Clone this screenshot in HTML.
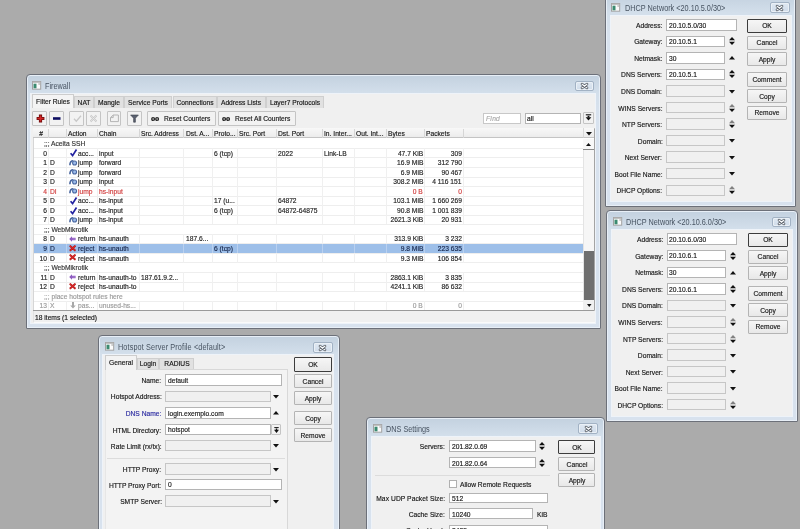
<!DOCTYPE html><html><head><meta charset="utf-8"><style>
*{margin:0;padding:0;box-sizing:border-box}
html,body{width:800px;height:529px;overflow:hidden;background:#ababab;position:relative;font-family:"Liberation Sans",sans-serif;font-size:7.2px;color:#161616}
div{position:absolute}
svg{position:absolute;overflow:visible}
.t{white-space:nowrap;line-height:10px;height:10px;-webkit-text-stroke:.16px currentColor;transform:scaleX(.93);transform-origin:0 50%}
.win{border:1px solid #6c7079;border-radius:4px 4px 1px 1px;background:linear-gradient(#c3d1df 0px,#d3dfeb 18px,#d8e2ee 40px,#d8e2ee 100%);box-shadow:inset 0 0 0 1px #e8eff7}
.cont{background:#f0f0f0;box-shadow:0 0 0 1px #eef3f9}
.ttl{font-size:8.4px;color:#475361;white-space:nowrap;line-height:10px;height:10px;transform:scaleX(.87);transform-origin:0 50%}
.btn{border:1px solid #b4b4b4;background:linear-gradient(#f6f6f6,#e8e8e8);border-radius:1px}
.okb{border:1px solid #3c3c3c;background:linear-gradient(#f6f6f6,#e8e8e8);border-radius:1px}
.tb{border:1px solid #c4c4c4;background:#f2f2f2;border-radius:1px}
.fld{background:#fff;border:1px solid #b4b4b4}
.fdis{background:#f0f0f0;border:1px solid #c6c6c6}
.cls{border:1px solid #a2b2c4;border-radius:2px;background:linear-gradient(#dfe8f2,#d0dcea);box-shadow:inset 0 0 0 1px #eaf0f6}
.tab{background:#e1e1e1;border:1px solid #cfcfcf;border-bottom:none}
.tabA{background:#f4f4f4;border:1px solid #cdcdcd;border-bottom:none}
</style></head><body><div id="root" style="left:0;top:0;width:800px;height:529px;will-change:transform">
<div class="win" style="left:26.00px;top:74.00px;width:575.00px;height:255.00px;"></div>
<div class="cont" style="left:31.30px;top:94.00px;width:563.70px;height:229.00px;"></div>
<svg style="left:32.00px;top:81.00px" width="9.2" height="8.7" viewBox="0 0 9.2 8.7"><rect x=".5" y=".5" width="8.2" height="7.7" fill="#fbfbfb" stroke="#a2a2a2"/><rect x=".5" y=".5" width="8.2" height="1.3" fill="#b4b4b4"/><rect x="1.5" y="2.7" width="3" height="4.6" fill="#3b8a70"/><rect x="6.6" y="2.4" width="1" height="1.2" fill="#777"/></svg>
<div class="ttl" style="left:45.40px;top:81.00px;">Firewall</div>
<div class="cls" style="left:574.50px;top:81.30px;width:19.70px;height:10.20px;"></div>
<svg style="left:580px;top:82px" width="9" height="8" viewBox="0 0 9 8"><path d="M2 2.1L7 5.9M7 2.1L2 5.9" stroke="#5f656d" stroke-width="2.6" stroke-linecap="round"/><path d="M2.1 2.2L6.9 5.8M6.9 2.2L2.1 5.8" stroke="#f6f8fa" stroke-width="1.1" stroke-linecap="round"/></svg>
<div class="tabA" style="left:32.00px;top:94.40px;width:42.40px;height:14.10px;"></div>
<div class="t" style="left:-6.80px;width:120px;text-align:center;top:97.30px;transform-origin:50% 50%;">Filter Rules</div>
<div class="tab" style="left:74.40px;top:96.20px;width:20.00px;height:11.40px;"></div>
<div class="t" style="left:24.40px;width:120px;text-align:center;top:97.90px;transform-origin:50% 50%;">NAT</div>
<div class="tab" style="left:94.40px;top:96.20px;width:29.40px;height:11.40px;"></div>
<div class="t" style="left:49.10px;width:120px;text-align:center;top:97.90px;transform-origin:50% 50%;">Mangle</div>
<div class="tab" style="left:123.80px;top:96.20px;width:48.70px;height:11.40px;"></div>
<div class="t" style="left:88.15px;width:120px;text-align:center;top:97.90px;transform-origin:50% 50%;">Service Ports</div>
<div class="tab" style="left:172.50px;top:96.20px;width:44.50px;height:11.40px;"></div>
<div class="t" style="left:134.75px;width:120px;text-align:center;top:97.90px;transform-origin:50% 50%;">Connections</div>
<div class="tab" style="left:217.00px;top:96.20px;width:48.50px;height:11.40px;"></div>
<div class="t" style="left:181.25px;width:120px;text-align:center;top:97.90px;transform-origin:50% 50%;">Address Lists</div>
<div class="tab" style="left:265.50px;top:96.20px;width:58.30px;height:11.40px;"></div>
<div class="t" style="left:234.65px;width:120px;text-align:center;top:97.90px;transform-origin:50% 50%;">Layer7 Protocols</div>
<div class="tb" style="left:32.30px;top:111.20px;width:14.60px;height:14.80px;"></div>
<div class="tb" style="left:49.00px;top:111.20px;width:14.75px;height:14.80px;"></div>
<div class="tb" style="left:69.40px;top:111.20px;width:14.60px;height:14.80px;"></div>
<div class="tb" style="left:86.25px;top:111.20px;width:14.35px;height:14.80px;"></div>
<div class="tb" style="left:106.50px;top:111.20px;width:14.50px;height:14.80px;"></div>
<div class="tb" style="left:127.20px;top:111.20px;width:14.40px;height:14.80px;"></div>
<svg style="left:34.5px;top:113px" width="11" height="11" viewBox="0 0 11 11"><path d="M5.5 1.6V9.4M1.6 5.5H9.4" stroke="#6e0c0c" stroke-width="3.2"/><path d="M5.5 2.4V8.6M2.4 5.5H8.6" stroke="#d42626" stroke-width="1.6"/></svg>
<svg style="left:51px;top:113px" width="11" height="11" viewBox="0 0 11 11"><path d="M2 5.5H9.5" stroke="#0c0c60" stroke-width="2.6"/></svg>
<svg style="left:71.5px;top:113px" width="11" height="11" viewBox="0 0 11 11"><path d="M2 5.8L4.3 8.2L9 2.8" stroke="#c8c8c8" stroke-width="1.3" fill="none"/></svg>
<svg style="left:88px;top:113px" width="11" height="11" viewBox="0 0 11 11"><path d="M2.5 2.5L8.5 8.5M8.5 2.5L2.5 8.5" stroke="#c8c8c8" stroke-width="1.8"/><path d="M2.5 2.5L8.5 8.5M8.5 2.5L2.5 8.5" stroke="#f2f2f2" stroke-width=".6"/></svg>
<svg style="left:108.5px;top:113px" width="11" height="11" viewBox="0 0 11 11"><path d="M1.5 4.6L4.2 2H9.4V8.6H1.5Z M1.5 4.6H4.2V2" stroke="#b4b4b4" stroke-width="1" fill="none"/></svg>
<svg style="left:129px;top:113px" width="11" height="11" viewBox="0 0 11 11"><path d="M1.6 2H9.4L6.4 5.2V9.2H4.6V5.2Z" fill="#5b6170" stroke="#3a3f4a" stroke-width=".6"/></svg>
<div class="tb" style="left:147.30px;top:111.20px;width:69.00px;height:14.80px;"></div>
<div class="tb" style="left:218.00px;top:111.20px;width:77.50px;height:14.80px;"></div>
<div class="t" style="left:151.00px;top:113.20px;font-weight:bold;font-size:9px;letter-spacing:-.1px;color:#000;font-family:Liberation Serif">oo</div>
<div class="t" style="left:163.80px;top:114.20px;">Reset Counters</div>
<div class="t" style="left:221.80px;top:113.20px;font-weight:bold;font-size:9px;letter-spacing:-.1px;color:#000;font-family:Liberation Serif">oo</div>
<div class="t" style="left:234.50px;top:114.20px;">Reset All Counters</div>
<div class="fld" style="left:482.60px;top:112.50px;width:38.30px;height:11.30px;border-color:#c8c8c8"></div>
<div class="t" style="left:486.00px;top:114.10px;color:#a8a8a8;font-style:italic;letter-spacing:.3px">Find</div>
<div class="fld" style="left:525.20px;top:112.50px;width:56.10px;height:11.30px;"></div>
<div class="t" style="left:527.00px;top:114.10px;">all</div>
<div class="tb" style="left:582.70px;top:112.30px;width:11.50px;height:11.70px;"></div>
<svg style="left:585px;top:114px" width="7" height="8" viewBox="0 0 7 8"><path d="M.8 .8H6.2" stroke="#111" stroke-width="1.1"/><path d="M.6 3.2H6.4L3.5 6.6Z" fill="#111"/><path d="M2.6 1.8H4.4V3.6H2.6Z" fill="#111"/></svg>
<div class="" style="left:33.00px;top:127.80px;width:561.50px;height:182.80px;background:#fff;border:1px solid #d6d6d6;border-right-color:#a4a4a4"></div>
<div class="" style="left:33.00px;top:127.80px;width:550.20px;height:10.70px;background:linear-gradient(#f8f8f8,#ececec);border-bottom:1px solid #c4c4c4"></div>
<div class="" style="left:48.25px;top:128.50px;width:1.00px;height:9.50px;background:#d6d6d6"></div>
<div class="" style="left:65.75px;top:128.50px;width:1.00px;height:9.50px;background:#d6d6d6"></div>
<div class="" style="left:97.00px;top:128.50px;width:1.00px;height:9.50px;background:#d6d6d6"></div>
<div class="" style="left:139.00px;top:128.50px;width:1.00px;height:9.50px;background:#d6d6d6"></div>
<div class="" style="left:183.25px;top:128.50px;width:1.00px;height:9.50px;background:#d6d6d6"></div>
<div class="" style="left:212.00px;top:128.50px;width:1.00px;height:9.50px;background:#d6d6d6"></div>
<div class="" style="left:237.00px;top:128.50px;width:1.00px;height:9.50px;background:#d6d6d6"></div>
<div class="" style="left:275.75px;top:128.50px;width:1.00px;height:9.50px;background:#d6d6d6"></div>
<div class="" style="left:322.00px;top:128.50px;width:1.00px;height:9.50px;background:#d6d6d6"></div>
<div class="" style="left:354.00px;top:128.50px;width:1.00px;height:9.50px;background:#d6d6d6"></div>
<div class="" style="left:385.80px;top:128.50px;width:1.00px;height:9.50px;background:#d6d6d6"></div>
<div class="" style="left:424.10px;top:128.50px;width:1.00px;height:9.50px;background:#d6d6d6"></div>
<div class="" style="left:462.90px;top:128.50px;width:1.00px;height:9.50px;background:#d6d6d6"></div>
<div class="t" style="left:-19.12px;width:120px;text-align:center;top:129.20px;transform-origin:50% 50%;">#</div>
<div class="t" style="left:68.05px;top:129.20px;">Action</div>
<div class="t" style="left:99.30px;top:129.20px;">Chain</div>
<div class="t" style="left:141.30px;top:129.20px;">Src. Address</div>
<div class="t" style="left:185.55px;top:129.20px;">Dst. A...</div>
<div class="t" style="left:214.30px;top:129.20px;">Proto...</div>
<div class="t" style="left:239.30px;top:129.20px;">Src. Port</div>
<div class="t" style="left:278.05px;top:129.20px;">Dst. Port</div>
<div class="t" style="left:324.30px;top:129.20px;">In. Inter...</div>
<div class="t" style="left:356.30px;top:129.20px;">Out. Int...</div>
<div class="t" style="left:388.10px;top:129.20px;">Bytes</div>
<div class="t" style="left:426.40px;top:129.20px;">Packets</div>
<div class="" style="left:583.20px;top:127.80px;width:11.00px;height:10.70px;background:linear-gradient(#f8f8f8,#ececec);border-left:1px solid #d8d8d8;border-bottom:1px solid #c4c4c4"></div>
<svg style="left:585.5px;top:131.5px" width="6" height="4" viewBox="0 0 6 4"><path d="M0 0H6L3 3.6Z" fill="#111"/></svg>
<div class="" style="left:34.00px;top:147.94px;width:549.20px;height:1.00px;background:#eeeeee"></div>
<div class="t" style="left:43.80px;top:139.07px;color:#333">;;; Aceita SSH</div>
<div class="" style="left:34.00px;top:157.48px;width:549.20px;height:1.00px;background:#eeeeee"></div>
<div class="" style="left:48.25px;top:148.14px;width:1.00px;height:9.54px;background:#f0f0f0"></div>
<div class="" style="left:65.75px;top:148.14px;width:1.00px;height:9.54px;background:#f0f0f0"></div>
<div class="" style="left:97.00px;top:148.14px;width:1.00px;height:9.54px;background:#f0f0f0"></div>
<div class="" style="left:139.00px;top:148.14px;width:1.00px;height:9.54px;background:#f0f0f0"></div>
<div class="" style="left:183.25px;top:148.14px;width:1.00px;height:9.54px;background:#f0f0f0"></div>
<div class="" style="left:212.00px;top:148.14px;width:1.00px;height:9.54px;background:#f0f0f0"></div>
<div class="" style="left:237.00px;top:148.14px;width:1.00px;height:9.54px;background:#f0f0f0"></div>
<div class="" style="left:275.75px;top:148.14px;width:1.00px;height:9.54px;background:#f0f0f0"></div>
<div class="" style="left:322.00px;top:148.14px;width:1.00px;height:9.54px;background:#f0f0f0"></div>
<div class="" style="left:354.00px;top:148.14px;width:1.00px;height:9.54px;background:#f0f0f0"></div>
<div class="" style="left:385.80px;top:148.14px;width:1.00px;height:9.54px;background:#f0f0f0"></div>
<div class="" style="left:424.10px;top:148.14px;width:1.00px;height:9.54px;background:#f0f0f0"></div>
<div class="" style="left:462.90px;top:148.14px;width:1.00px;height:9.54px;background:#f0f0f0"></div>
<div class="t" style="right:752.80px;top:148.61px;text-align:right;transform-origin:100% 50%;color:#222">0</div>
<div class="t" style="left:49.80px;top:148.61px;color:#222"></div>
<svg style="left:69.6px;top:149.34px" width="7" height="7.4" viewBox="0 0 7 7.4"><path d="M.6 4.2L2.6 6.6L6.5 .5" stroke="#2222a0" stroke-width="1.7" fill="none"/></svg>
<div class="t" style="left:77.80px;top:148.61px;color:#222">acc...</div>
<div class="t" style="left:99.30px;top:148.61px;color:#222">input</div>
<div class="t" style="left:214.30px;top:148.61px;color:#222">6 (tcp)</div>
<div class="t" style="left:278.05px;top:148.61px;color:#222">2022</div>
<div class="t" style="left:324.30px;top:148.61px;color:#222">Link-LB</div>
<div class="t" style="right:376.90px;top:148.61px;text-align:right;transform-origin:100% 50%;color:#222">47.7 KiB</div>
<div class="t" style="right:338.10px;top:148.61px;text-align:right;transform-origin:100% 50%;color:#222">309</div>
<div class="" style="left:34.00px;top:167.02px;width:549.20px;height:1.00px;background:#eeeeee"></div>
<div class="" style="left:48.25px;top:157.68px;width:1.00px;height:9.54px;background:#f0f0f0"></div>
<div class="" style="left:65.75px;top:157.68px;width:1.00px;height:9.54px;background:#f0f0f0"></div>
<div class="" style="left:97.00px;top:157.68px;width:1.00px;height:9.54px;background:#f0f0f0"></div>
<div class="" style="left:139.00px;top:157.68px;width:1.00px;height:9.54px;background:#f0f0f0"></div>
<div class="" style="left:183.25px;top:157.68px;width:1.00px;height:9.54px;background:#f0f0f0"></div>
<div class="" style="left:212.00px;top:157.68px;width:1.00px;height:9.54px;background:#f0f0f0"></div>
<div class="" style="left:237.00px;top:157.68px;width:1.00px;height:9.54px;background:#f0f0f0"></div>
<div class="" style="left:275.75px;top:157.68px;width:1.00px;height:9.54px;background:#f0f0f0"></div>
<div class="" style="left:322.00px;top:157.68px;width:1.00px;height:9.54px;background:#f0f0f0"></div>
<div class="" style="left:354.00px;top:157.68px;width:1.00px;height:9.54px;background:#f0f0f0"></div>
<div class="" style="left:385.80px;top:157.68px;width:1.00px;height:9.54px;background:#f0f0f0"></div>
<div class="" style="left:424.10px;top:157.68px;width:1.00px;height:9.54px;background:#f0f0f0"></div>
<div class="" style="left:462.90px;top:157.68px;width:1.00px;height:9.54px;background:#f0f0f0"></div>
<div class="t" style="right:752.80px;top:158.15px;text-align:right;transform-origin:100% 50%;color:#222">1</div>
<div class="t" style="left:49.80px;top:158.15px;color:#222">D</div>
<svg style="left:68.9px;top:159.68px" width="8.4" height="5.6" viewBox="0 0 8.4 5.6"><path d="M.9 5.2C.9 2 2.4 .7 4.4 .7" stroke="#46649e" stroke-width="1.6" fill="none"/><circle cx="5.6" cy="3" r="2" fill="#9cbcea" stroke="#4a68a2" stroke-width="1.1"/></svg>
<div class="t" style="left:77.80px;top:158.15px;color:#222">jump</div>
<div class="t" style="left:99.30px;top:158.15px;color:#222">forward</div>
<div class="t" style="right:376.90px;top:158.15px;text-align:right;transform-origin:100% 50%;color:#222">16.9 MiB</div>
<div class="t" style="right:338.10px;top:158.15px;text-align:right;transform-origin:100% 50%;color:#222">312 790</div>
<div class="" style="left:34.00px;top:176.56px;width:549.20px;height:1.00px;background:#eeeeee"></div>
<div class="" style="left:48.25px;top:167.22px;width:1.00px;height:9.54px;background:#f0f0f0"></div>
<div class="" style="left:65.75px;top:167.22px;width:1.00px;height:9.54px;background:#f0f0f0"></div>
<div class="" style="left:97.00px;top:167.22px;width:1.00px;height:9.54px;background:#f0f0f0"></div>
<div class="" style="left:139.00px;top:167.22px;width:1.00px;height:9.54px;background:#f0f0f0"></div>
<div class="" style="left:183.25px;top:167.22px;width:1.00px;height:9.54px;background:#f0f0f0"></div>
<div class="" style="left:212.00px;top:167.22px;width:1.00px;height:9.54px;background:#f0f0f0"></div>
<div class="" style="left:237.00px;top:167.22px;width:1.00px;height:9.54px;background:#f0f0f0"></div>
<div class="" style="left:275.75px;top:167.22px;width:1.00px;height:9.54px;background:#f0f0f0"></div>
<div class="" style="left:322.00px;top:167.22px;width:1.00px;height:9.54px;background:#f0f0f0"></div>
<div class="" style="left:354.00px;top:167.22px;width:1.00px;height:9.54px;background:#f0f0f0"></div>
<div class="" style="left:385.80px;top:167.22px;width:1.00px;height:9.54px;background:#f0f0f0"></div>
<div class="" style="left:424.10px;top:167.22px;width:1.00px;height:9.54px;background:#f0f0f0"></div>
<div class="" style="left:462.90px;top:167.22px;width:1.00px;height:9.54px;background:#f0f0f0"></div>
<div class="t" style="right:752.80px;top:167.69px;text-align:right;transform-origin:100% 50%;color:#222">2</div>
<div class="t" style="left:49.80px;top:167.69px;color:#222">D</div>
<svg style="left:68.9px;top:169.22px" width="8.4" height="5.6" viewBox="0 0 8.4 5.6"><path d="M.9 5.2C.9 2 2.4 .7 4.4 .7" stroke="#46649e" stroke-width="1.6" fill="none"/><circle cx="5.6" cy="3" r="2" fill="#9cbcea" stroke="#4a68a2" stroke-width="1.1"/></svg>
<div class="t" style="left:77.80px;top:167.69px;color:#222">jump</div>
<div class="t" style="left:99.30px;top:167.69px;color:#222">forward</div>
<div class="t" style="right:376.90px;top:167.69px;text-align:right;transform-origin:100% 50%;color:#222">6.9 MiB</div>
<div class="t" style="right:338.10px;top:167.69px;text-align:right;transform-origin:100% 50%;color:#222">90 467</div>
<div class="" style="left:34.00px;top:186.10px;width:549.20px;height:1.00px;background:#eeeeee"></div>
<div class="" style="left:48.25px;top:176.76px;width:1.00px;height:9.54px;background:#f0f0f0"></div>
<div class="" style="left:65.75px;top:176.76px;width:1.00px;height:9.54px;background:#f0f0f0"></div>
<div class="" style="left:97.00px;top:176.76px;width:1.00px;height:9.54px;background:#f0f0f0"></div>
<div class="" style="left:139.00px;top:176.76px;width:1.00px;height:9.54px;background:#f0f0f0"></div>
<div class="" style="left:183.25px;top:176.76px;width:1.00px;height:9.54px;background:#f0f0f0"></div>
<div class="" style="left:212.00px;top:176.76px;width:1.00px;height:9.54px;background:#f0f0f0"></div>
<div class="" style="left:237.00px;top:176.76px;width:1.00px;height:9.54px;background:#f0f0f0"></div>
<div class="" style="left:275.75px;top:176.76px;width:1.00px;height:9.54px;background:#f0f0f0"></div>
<div class="" style="left:322.00px;top:176.76px;width:1.00px;height:9.54px;background:#f0f0f0"></div>
<div class="" style="left:354.00px;top:176.76px;width:1.00px;height:9.54px;background:#f0f0f0"></div>
<div class="" style="left:385.80px;top:176.76px;width:1.00px;height:9.54px;background:#f0f0f0"></div>
<div class="" style="left:424.10px;top:176.76px;width:1.00px;height:9.54px;background:#f0f0f0"></div>
<div class="" style="left:462.90px;top:176.76px;width:1.00px;height:9.54px;background:#f0f0f0"></div>
<div class="t" style="right:752.80px;top:177.23px;text-align:right;transform-origin:100% 50%;color:#222">3</div>
<div class="t" style="left:49.80px;top:177.23px;color:#222">D</div>
<svg style="left:68.9px;top:178.76px" width="8.4" height="5.6" viewBox="0 0 8.4 5.6"><path d="M.9 5.2C.9 2 2.4 .7 4.4 .7" stroke="#46649e" stroke-width="1.6" fill="none"/><circle cx="5.6" cy="3" r="2" fill="#9cbcea" stroke="#4a68a2" stroke-width="1.1"/></svg>
<div class="t" style="left:77.80px;top:177.23px;color:#222">jump</div>
<div class="t" style="left:99.30px;top:177.23px;color:#222">input</div>
<div class="t" style="right:376.90px;top:177.23px;text-align:right;transform-origin:100% 50%;color:#222">308.2 MiB</div>
<div class="t" style="right:338.10px;top:177.23px;text-align:right;transform-origin:100% 50%;color:#222">4 116 151</div>
<div class="" style="left:34.00px;top:195.64px;width:549.20px;height:1.00px;background:#eeeeee"></div>
<div class="" style="left:48.25px;top:186.30px;width:1.00px;height:9.54px;background:#f0f0f0"></div>
<div class="" style="left:65.75px;top:186.30px;width:1.00px;height:9.54px;background:#f0f0f0"></div>
<div class="" style="left:97.00px;top:186.30px;width:1.00px;height:9.54px;background:#f0f0f0"></div>
<div class="" style="left:139.00px;top:186.30px;width:1.00px;height:9.54px;background:#f0f0f0"></div>
<div class="" style="left:183.25px;top:186.30px;width:1.00px;height:9.54px;background:#f0f0f0"></div>
<div class="" style="left:212.00px;top:186.30px;width:1.00px;height:9.54px;background:#f0f0f0"></div>
<div class="" style="left:237.00px;top:186.30px;width:1.00px;height:9.54px;background:#f0f0f0"></div>
<div class="" style="left:275.75px;top:186.30px;width:1.00px;height:9.54px;background:#f0f0f0"></div>
<div class="" style="left:322.00px;top:186.30px;width:1.00px;height:9.54px;background:#f0f0f0"></div>
<div class="" style="left:354.00px;top:186.30px;width:1.00px;height:9.54px;background:#f0f0f0"></div>
<div class="" style="left:385.80px;top:186.30px;width:1.00px;height:9.54px;background:#f0f0f0"></div>
<div class="" style="left:424.10px;top:186.30px;width:1.00px;height:9.54px;background:#f0f0f0"></div>
<div class="" style="left:462.90px;top:186.30px;width:1.00px;height:9.54px;background:#f0f0f0"></div>
<div class="t" style="right:752.80px;top:186.77px;text-align:right;transform-origin:100% 50%;color:#d03a3a">4</div>
<div class="t" style="left:49.80px;top:186.77px;color:#d03a3a">DI</div>
<svg style="left:68.9px;top:188.30px" width="8.4" height="5.6" viewBox="0 0 8.4 5.6"><path d="M.9 5.2C.9 2 2.4 .7 4.4 .7" stroke="#46649e" stroke-width="1.6" fill="none"/><circle cx="5.6" cy="3" r="2" fill="#9cbcea" stroke="#4a68a2" stroke-width="1.1"/></svg>
<div class="t" style="left:77.80px;top:186.77px;color:#d03a3a">jump</div>
<div class="t" style="left:99.30px;top:186.77px;color:#d03a3a">hs-input</div>
<div class="t" style="right:376.90px;top:186.77px;text-align:right;transform-origin:100% 50%;color:#d03a3a">0 B</div>
<div class="t" style="right:338.10px;top:186.77px;text-align:right;transform-origin:100% 50%;color:#d03a3a">0</div>
<div class="" style="left:34.00px;top:205.18px;width:549.20px;height:1.00px;background:#eeeeee"></div>
<div class="" style="left:48.25px;top:195.84px;width:1.00px;height:9.54px;background:#f0f0f0"></div>
<div class="" style="left:65.75px;top:195.84px;width:1.00px;height:9.54px;background:#f0f0f0"></div>
<div class="" style="left:97.00px;top:195.84px;width:1.00px;height:9.54px;background:#f0f0f0"></div>
<div class="" style="left:139.00px;top:195.84px;width:1.00px;height:9.54px;background:#f0f0f0"></div>
<div class="" style="left:183.25px;top:195.84px;width:1.00px;height:9.54px;background:#f0f0f0"></div>
<div class="" style="left:212.00px;top:195.84px;width:1.00px;height:9.54px;background:#f0f0f0"></div>
<div class="" style="left:237.00px;top:195.84px;width:1.00px;height:9.54px;background:#f0f0f0"></div>
<div class="" style="left:275.75px;top:195.84px;width:1.00px;height:9.54px;background:#f0f0f0"></div>
<div class="" style="left:322.00px;top:195.84px;width:1.00px;height:9.54px;background:#f0f0f0"></div>
<div class="" style="left:354.00px;top:195.84px;width:1.00px;height:9.54px;background:#f0f0f0"></div>
<div class="" style="left:385.80px;top:195.84px;width:1.00px;height:9.54px;background:#f0f0f0"></div>
<div class="" style="left:424.10px;top:195.84px;width:1.00px;height:9.54px;background:#f0f0f0"></div>
<div class="" style="left:462.90px;top:195.84px;width:1.00px;height:9.54px;background:#f0f0f0"></div>
<div class="t" style="right:752.80px;top:196.31px;text-align:right;transform-origin:100% 50%;color:#222">5</div>
<div class="t" style="left:49.80px;top:196.31px;color:#222">D</div>
<svg style="left:69.6px;top:197.04px" width="7" height="7.4" viewBox="0 0 7 7.4"><path d="M.6 4.2L2.6 6.6L6.5 .5" stroke="#2222a0" stroke-width="1.7" fill="none"/></svg>
<div class="t" style="left:77.80px;top:196.31px;color:#222">acc...</div>
<div class="t" style="left:99.30px;top:196.31px;color:#222">hs-input</div>
<div class="t" style="left:214.30px;top:196.31px;color:#222">17 (u...</div>
<div class="t" style="left:278.05px;top:196.31px;color:#222">64872</div>
<div class="t" style="right:376.90px;top:196.31px;text-align:right;transform-origin:100% 50%;color:#222">103.1 MiB</div>
<div class="t" style="right:338.10px;top:196.31px;text-align:right;transform-origin:100% 50%;color:#222">1 660 269</div>
<div class="" style="left:34.00px;top:214.72px;width:549.20px;height:1.00px;background:#eeeeee"></div>
<div class="" style="left:48.25px;top:205.38px;width:1.00px;height:9.54px;background:#f0f0f0"></div>
<div class="" style="left:65.75px;top:205.38px;width:1.00px;height:9.54px;background:#f0f0f0"></div>
<div class="" style="left:97.00px;top:205.38px;width:1.00px;height:9.54px;background:#f0f0f0"></div>
<div class="" style="left:139.00px;top:205.38px;width:1.00px;height:9.54px;background:#f0f0f0"></div>
<div class="" style="left:183.25px;top:205.38px;width:1.00px;height:9.54px;background:#f0f0f0"></div>
<div class="" style="left:212.00px;top:205.38px;width:1.00px;height:9.54px;background:#f0f0f0"></div>
<div class="" style="left:237.00px;top:205.38px;width:1.00px;height:9.54px;background:#f0f0f0"></div>
<div class="" style="left:275.75px;top:205.38px;width:1.00px;height:9.54px;background:#f0f0f0"></div>
<div class="" style="left:322.00px;top:205.38px;width:1.00px;height:9.54px;background:#f0f0f0"></div>
<div class="" style="left:354.00px;top:205.38px;width:1.00px;height:9.54px;background:#f0f0f0"></div>
<div class="" style="left:385.80px;top:205.38px;width:1.00px;height:9.54px;background:#f0f0f0"></div>
<div class="" style="left:424.10px;top:205.38px;width:1.00px;height:9.54px;background:#f0f0f0"></div>
<div class="" style="left:462.90px;top:205.38px;width:1.00px;height:9.54px;background:#f0f0f0"></div>
<div class="t" style="right:752.80px;top:205.85px;text-align:right;transform-origin:100% 50%;color:#222">6</div>
<div class="t" style="left:49.80px;top:205.85px;color:#222">D</div>
<svg style="left:69.6px;top:206.58px" width="7" height="7.4" viewBox="0 0 7 7.4"><path d="M.6 4.2L2.6 6.6L6.5 .5" stroke="#2222a0" stroke-width="1.7" fill="none"/></svg>
<div class="t" style="left:77.80px;top:205.85px;color:#222">acc...</div>
<div class="t" style="left:99.30px;top:205.85px;color:#222">hs-input</div>
<div class="t" style="left:214.30px;top:205.85px;color:#222">6 (tcp)</div>
<div class="t" style="left:278.05px;top:205.85px;color:#222">64872-64875</div>
<div class="t" style="right:376.90px;top:205.85px;text-align:right;transform-origin:100% 50%;color:#222">90.8 MiB</div>
<div class="t" style="right:338.10px;top:205.85px;text-align:right;transform-origin:100% 50%;color:#222">1 001 839</div>
<div class="" style="left:34.00px;top:224.26px;width:549.20px;height:1.00px;background:#eeeeee"></div>
<div class="" style="left:48.25px;top:214.92px;width:1.00px;height:9.54px;background:#f0f0f0"></div>
<div class="" style="left:65.75px;top:214.92px;width:1.00px;height:9.54px;background:#f0f0f0"></div>
<div class="" style="left:97.00px;top:214.92px;width:1.00px;height:9.54px;background:#f0f0f0"></div>
<div class="" style="left:139.00px;top:214.92px;width:1.00px;height:9.54px;background:#f0f0f0"></div>
<div class="" style="left:183.25px;top:214.92px;width:1.00px;height:9.54px;background:#f0f0f0"></div>
<div class="" style="left:212.00px;top:214.92px;width:1.00px;height:9.54px;background:#f0f0f0"></div>
<div class="" style="left:237.00px;top:214.92px;width:1.00px;height:9.54px;background:#f0f0f0"></div>
<div class="" style="left:275.75px;top:214.92px;width:1.00px;height:9.54px;background:#f0f0f0"></div>
<div class="" style="left:322.00px;top:214.92px;width:1.00px;height:9.54px;background:#f0f0f0"></div>
<div class="" style="left:354.00px;top:214.92px;width:1.00px;height:9.54px;background:#f0f0f0"></div>
<div class="" style="left:385.80px;top:214.92px;width:1.00px;height:9.54px;background:#f0f0f0"></div>
<div class="" style="left:424.10px;top:214.92px;width:1.00px;height:9.54px;background:#f0f0f0"></div>
<div class="" style="left:462.90px;top:214.92px;width:1.00px;height:9.54px;background:#f0f0f0"></div>
<div class="t" style="right:752.80px;top:215.39px;text-align:right;transform-origin:100% 50%;color:#222">7</div>
<div class="t" style="left:49.80px;top:215.39px;color:#222">D</div>
<svg style="left:68.9px;top:216.92px" width="8.4" height="5.6" viewBox="0 0 8.4 5.6"><path d="M.9 5.2C.9 2 2.4 .7 4.4 .7" stroke="#46649e" stroke-width="1.6" fill="none"/><circle cx="5.6" cy="3" r="2" fill="#9cbcea" stroke="#4a68a2" stroke-width="1.1"/></svg>
<div class="t" style="left:77.80px;top:215.39px;color:#222">jump</div>
<div class="t" style="left:99.30px;top:215.39px;color:#222">hs-input</div>
<div class="t" style="right:376.90px;top:215.39px;text-align:right;transform-origin:100% 50%;color:#222">2621.3 KiB</div>
<div class="t" style="right:338.10px;top:215.39px;text-align:right;transform-origin:100% 50%;color:#222">20 931</div>
<div class="" style="left:34.00px;top:233.80px;width:549.20px;height:1.00px;background:#eeeeee"></div>
<div class="t" style="left:43.80px;top:224.93px;color:#333">;;; WebMikrotik</div>
<div class="" style="left:34.00px;top:243.34px;width:549.20px;height:1.00px;background:#eeeeee"></div>
<div class="" style="left:48.25px;top:234.00px;width:1.00px;height:9.54px;background:#f0f0f0"></div>
<div class="" style="left:65.75px;top:234.00px;width:1.00px;height:9.54px;background:#f0f0f0"></div>
<div class="" style="left:97.00px;top:234.00px;width:1.00px;height:9.54px;background:#f0f0f0"></div>
<div class="" style="left:139.00px;top:234.00px;width:1.00px;height:9.54px;background:#f0f0f0"></div>
<div class="" style="left:183.25px;top:234.00px;width:1.00px;height:9.54px;background:#f0f0f0"></div>
<div class="" style="left:212.00px;top:234.00px;width:1.00px;height:9.54px;background:#f0f0f0"></div>
<div class="" style="left:237.00px;top:234.00px;width:1.00px;height:9.54px;background:#f0f0f0"></div>
<div class="" style="left:275.75px;top:234.00px;width:1.00px;height:9.54px;background:#f0f0f0"></div>
<div class="" style="left:322.00px;top:234.00px;width:1.00px;height:9.54px;background:#f0f0f0"></div>
<div class="" style="left:354.00px;top:234.00px;width:1.00px;height:9.54px;background:#f0f0f0"></div>
<div class="" style="left:385.80px;top:234.00px;width:1.00px;height:9.54px;background:#f0f0f0"></div>
<div class="" style="left:424.10px;top:234.00px;width:1.00px;height:9.54px;background:#f0f0f0"></div>
<div class="" style="left:462.90px;top:234.00px;width:1.00px;height:9.54px;background:#f0f0f0"></div>
<div class="t" style="right:752.80px;top:234.47px;text-align:right;transform-origin:100% 50%;color:#222">8</div>
<div class="t" style="left:49.80px;top:234.47px;color:#222">D</div>
<svg style="left:69.3px;top:235.80px" width="7" height="6" viewBox="0 0 7 6"><path d="M.2 3L3 .3V1.8H6.6V4.2H3V5.7Z" fill="#8e5cc0"/><path d="M3.4 3H6.2" stroke="#c8a8e8" stroke-width=".5"/></svg>
<div class="t" style="left:77.80px;top:234.47px;color:#222">return</div>
<div class="t" style="left:99.30px;top:234.47px;color:#222">hs-unauth</div>
<div class="t" style="left:185.55px;top:234.47px;color:#222">187.6...</div>
<div class="t" style="right:376.90px;top:234.47px;text-align:right;transform-origin:100% 50%;color:#222">313.9 KiB</div>
<div class="t" style="right:338.10px;top:234.47px;text-align:right;transform-origin:100% 50%;color:#222">3 232</div>
<div class="" style="left:33.50px;top:243.74px;width:549.70px;height:9.04px;background:#9dbfe9"></div>
<div class="" style="left:34.00px;top:252.88px;width:549.20px;height:1.00px;background:#eeeeee"></div>
<div class="" style="left:48.25px;top:243.54px;width:1.00px;height:9.54px;background:#b9d0ef"></div>
<div class="" style="left:65.75px;top:243.54px;width:1.00px;height:9.54px;background:#b9d0ef"></div>
<div class="" style="left:97.00px;top:243.54px;width:1.00px;height:9.54px;background:#b9d0ef"></div>
<div class="" style="left:139.00px;top:243.54px;width:1.00px;height:9.54px;background:#b9d0ef"></div>
<div class="" style="left:183.25px;top:243.54px;width:1.00px;height:9.54px;background:#b9d0ef"></div>
<div class="" style="left:212.00px;top:243.54px;width:1.00px;height:9.54px;background:#b9d0ef"></div>
<div class="" style="left:237.00px;top:243.54px;width:1.00px;height:9.54px;background:#b9d0ef"></div>
<div class="" style="left:275.75px;top:243.54px;width:1.00px;height:9.54px;background:#b9d0ef"></div>
<div class="" style="left:322.00px;top:243.54px;width:1.00px;height:9.54px;background:#b9d0ef"></div>
<div class="" style="left:354.00px;top:243.54px;width:1.00px;height:9.54px;background:#b9d0ef"></div>
<div class="" style="left:385.80px;top:243.54px;width:1.00px;height:9.54px;background:#b9d0ef"></div>
<div class="" style="left:424.10px;top:243.54px;width:1.00px;height:9.54px;background:#b9d0ef"></div>
<div class="" style="left:462.90px;top:243.54px;width:1.00px;height:9.54px;background:#b9d0ef"></div>
<div class="t" style="right:752.80px;top:244.01px;text-align:right;transform-origin:100% 50%;color:#14244a">9</div>
<div class="t" style="left:49.80px;top:244.01px;color:#14244a">D</div>
<svg style="left:69.2px;top:244.94px" width="7.2" height="6.4" viewBox="0 0 7.2 6.4"><path d="M.8 .7L6.4 5.7M6.4 .7L.8 5.7" stroke="#b01a1a" stroke-width="2"/><path d="M.8 .7L6.4 5.7M6.4 .7L.8 5.7" stroke="#e42a2a" stroke-width="1"/></svg>
<div class="t" style="left:77.80px;top:244.01px;color:#14244a">reject</div>
<div class="t" style="left:99.30px;top:244.01px;color:#14244a">hs-unauth</div>
<div class="t" style="left:214.30px;top:244.01px;color:#14244a">6 (tcp)</div>
<div class="t" style="right:376.90px;top:244.01px;text-align:right;transform-origin:100% 50%;color:#14244a">9.8 MiB</div>
<div class="t" style="right:338.10px;top:244.01px;text-align:right;transform-origin:100% 50%;color:#14244a">223 635</div>
<div class="" style="left:34.00px;top:262.42px;width:549.20px;height:1.00px;background:#eeeeee"></div>
<div class="" style="left:48.25px;top:253.08px;width:1.00px;height:9.54px;background:#f0f0f0"></div>
<div class="" style="left:65.75px;top:253.08px;width:1.00px;height:9.54px;background:#f0f0f0"></div>
<div class="" style="left:97.00px;top:253.08px;width:1.00px;height:9.54px;background:#f0f0f0"></div>
<div class="" style="left:139.00px;top:253.08px;width:1.00px;height:9.54px;background:#f0f0f0"></div>
<div class="" style="left:183.25px;top:253.08px;width:1.00px;height:9.54px;background:#f0f0f0"></div>
<div class="" style="left:212.00px;top:253.08px;width:1.00px;height:9.54px;background:#f0f0f0"></div>
<div class="" style="left:237.00px;top:253.08px;width:1.00px;height:9.54px;background:#f0f0f0"></div>
<div class="" style="left:275.75px;top:253.08px;width:1.00px;height:9.54px;background:#f0f0f0"></div>
<div class="" style="left:322.00px;top:253.08px;width:1.00px;height:9.54px;background:#f0f0f0"></div>
<div class="" style="left:354.00px;top:253.08px;width:1.00px;height:9.54px;background:#f0f0f0"></div>
<div class="" style="left:385.80px;top:253.08px;width:1.00px;height:9.54px;background:#f0f0f0"></div>
<div class="" style="left:424.10px;top:253.08px;width:1.00px;height:9.54px;background:#f0f0f0"></div>
<div class="" style="left:462.90px;top:253.08px;width:1.00px;height:9.54px;background:#f0f0f0"></div>
<div class="t" style="right:752.80px;top:253.55px;text-align:right;transform-origin:100% 50%;color:#222">10</div>
<div class="t" style="left:49.80px;top:253.55px;color:#222">D</div>
<svg style="left:69.2px;top:254.48px" width="7.2" height="6.4" viewBox="0 0 7.2 6.4"><path d="M.8 .7L6.4 5.7M6.4 .7L.8 5.7" stroke="#b01a1a" stroke-width="2"/><path d="M.8 .7L6.4 5.7M6.4 .7L.8 5.7" stroke="#e42a2a" stroke-width="1"/></svg>
<div class="t" style="left:77.80px;top:253.55px;color:#222">reject</div>
<div class="t" style="left:99.30px;top:253.55px;color:#222">hs-unauth</div>
<div class="t" style="right:376.90px;top:253.55px;text-align:right;transform-origin:100% 50%;color:#222">9.3 MiB</div>
<div class="t" style="right:338.10px;top:253.55px;text-align:right;transform-origin:100% 50%;color:#222">106 854</div>
<div class="" style="left:34.00px;top:271.96px;width:549.20px;height:1.00px;background:#eeeeee"></div>
<div class="t" style="left:43.80px;top:263.09px;color:#333">;;; WebMikrotik</div>
<div class="" style="left:34.00px;top:281.50px;width:549.20px;height:1.00px;background:#eeeeee"></div>
<div class="" style="left:48.25px;top:272.16px;width:1.00px;height:9.54px;background:#f0f0f0"></div>
<div class="" style="left:65.75px;top:272.16px;width:1.00px;height:9.54px;background:#f0f0f0"></div>
<div class="" style="left:97.00px;top:272.16px;width:1.00px;height:9.54px;background:#f0f0f0"></div>
<div class="" style="left:139.00px;top:272.16px;width:1.00px;height:9.54px;background:#f0f0f0"></div>
<div class="" style="left:183.25px;top:272.16px;width:1.00px;height:9.54px;background:#f0f0f0"></div>
<div class="" style="left:212.00px;top:272.16px;width:1.00px;height:9.54px;background:#f0f0f0"></div>
<div class="" style="left:237.00px;top:272.16px;width:1.00px;height:9.54px;background:#f0f0f0"></div>
<div class="" style="left:275.75px;top:272.16px;width:1.00px;height:9.54px;background:#f0f0f0"></div>
<div class="" style="left:322.00px;top:272.16px;width:1.00px;height:9.54px;background:#f0f0f0"></div>
<div class="" style="left:354.00px;top:272.16px;width:1.00px;height:9.54px;background:#f0f0f0"></div>
<div class="" style="left:385.80px;top:272.16px;width:1.00px;height:9.54px;background:#f0f0f0"></div>
<div class="" style="left:424.10px;top:272.16px;width:1.00px;height:9.54px;background:#f0f0f0"></div>
<div class="" style="left:462.90px;top:272.16px;width:1.00px;height:9.54px;background:#f0f0f0"></div>
<div class="t" style="right:752.80px;top:272.63px;text-align:right;transform-origin:100% 50%;color:#222">11</div>
<div class="t" style="left:49.80px;top:272.63px;color:#222">D</div>
<svg style="left:69.3px;top:273.96px" width="7" height="6" viewBox="0 0 7 6"><path d="M.2 3L3 .3V1.8H6.6V4.2H3V5.7Z" fill="#8e5cc0"/><path d="M3.4 3H6.2" stroke="#c8a8e8" stroke-width=".5"/></svg>
<div class="t" style="left:77.80px;top:272.63px;color:#222">return</div>
<div class="t" style="left:99.30px;top:272.63px;color:#222">hs-unauth-to</div>
<div class="t" style="left:141.30px;top:272.63px;color:#222">187.61.9.2...</div>
<div class="t" style="right:376.90px;top:272.63px;text-align:right;transform-origin:100% 50%;color:#222">2863.1 KiB</div>
<div class="t" style="right:338.10px;top:272.63px;text-align:right;transform-origin:100% 50%;color:#222">3 835</div>
<div class="" style="left:34.00px;top:291.04px;width:549.20px;height:1.00px;background:#eeeeee"></div>
<div class="" style="left:48.25px;top:281.70px;width:1.00px;height:9.54px;background:#f0f0f0"></div>
<div class="" style="left:65.75px;top:281.70px;width:1.00px;height:9.54px;background:#f0f0f0"></div>
<div class="" style="left:97.00px;top:281.70px;width:1.00px;height:9.54px;background:#f0f0f0"></div>
<div class="" style="left:139.00px;top:281.70px;width:1.00px;height:9.54px;background:#f0f0f0"></div>
<div class="" style="left:183.25px;top:281.70px;width:1.00px;height:9.54px;background:#f0f0f0"></div>
<div class="" style="left:212.00px;top:281.70px;width:1.00px;height:9.54px;background:#f0f0f0"></div>
<div class="" style="left:237.00px;top:281.70px;width:1.00px;height:9.54px;background:#f0f0f0"></div>
<div class="" style="left:275.75px;top:281.70px;width:1.00px;height:9.54px;background:#f0f0f0"></div>
<div class="" style="left:322.00px;top:281.70px;width:1.00px;height:9.54px;background:#f0f0f0"></div>
<div class="" style="left:354.00px;top:281.70px;width:1.00px;height:9.54px;background:#f0f0f0"></div>
<div class="" style="left:385.80px;top:281.70px;width:1.00px;height:9.54px;background:#f0f0f0"></div>
<div class="" style="left:424.10px;top:281.70px;width:1.00px;height:9.54px;background:#f0f0f0"></div>
<div class="" style="left:462.90px;top:281.70px;width:1.00px;height:9.54px;background:#f0f0f0"></div>
<div class="t" style="right:752.80px;top:282.17px;text-align:right;transform-origin:100% 50%;color:#222">12</div>
<div class="t" style="left:49.80px;top:282.17px;color:#222">D</div>
<svg style="left:69.2px;top:283.10px" width="7.2" height="6.4" viewBox="0 0 7.2 6.4"><path d="M.8 .7L6.4 5.7M6.4 .7L.8 5.7" stroke="#b01a1a" stroke-width="2"/><path d="M.8 .7L6.4 5.7M6.4 .7L.8 5.7" stroke="#e42a2a" stroke-width="1"/></svg>
<div class="t" style="left:77.80px;top:282.17px;color:#222">reject</div>
<div class="t" style="left:99.30px;top:282.17px;color:#222">hs-unauth-to</div>
<div class="t" style="right:376.90px;top:282.17px;text-align:right;transform-origin:100% 50%;color:#222">4241.1 KiB</div>
<div class="t" style="right:338.10px;top:282.17px;text-align:right;transform-origin:100% 50%;color:#222">86 632</div>
<div class="" style="left:34.00px;top:300.58px;width:549.20px;height:1.00px;background:#eeeeee"></div>
<div class="t" style="left:43.80px;top:291.71px;color:#9a9a9a">;;; place hotspot rules here</div>
<div class="" style="left:34.00px;top:310.12px;width:549.20px;height:1.00px;background:#eeeeee"></div>
<div class="" style="left:48.25px;top:300.78px;width:1.00px;height:9.54px;background:#f0f0f0"></div>
<div class="" style="left:65.75px;top:300.78px;width:1.00px;height:9.54px;background:#f0f0f0"></div>
<div class="" style="left:97.00px;top:300.78px;width:1.00px;height:9.54px;background:#f0f0f0"></div>
<div class="" style="left:139.00px;top:300.78px;width:1.00px;height:9.54px;background:#f0f0f0"></div>
<div class="" style="left:183.25px;top:300.78px;width:1.00px;height:9.54px;background:#f0f0f0"></div>
<div class="" style="left:212.00px;top:300.78px;width:1.00px;height:9.54px;background:#f0f0f0"></div>
<div class="" style="left:237.00px;top:300.78px;width:1.00px;height:9.54px;background:#f0f0f0"></div>
<div class="" style="left:275.75px;top:300.78px;width:1.00px;height:9.54px;background:#f0f0f0"></div>
<div class="" style="left:322.00px;top:300.78px;width:1.00px;height:9.54px;background:#f0f0f0"></div>
<div class="" style="left:354.00px;top:300.78px;width:1.00px;height:9.54px;background:#f0f0f0"></div>
<div class="" style="left:385.80px;top:300.78px;width:1.00px;height:9.54px;background:#f0f0f0"></div>
<div class="" style="left:424.10px;top:300.78px;width:1.00px;height:9.54px;background:#f0f0f0"></div>
<div class="" style="left:462.90px;top:300.78px;width:1.00px;height:9.54px;background:#f0f0f0"></div>
<div class="t" style="right:752.80px;top:301.25px;text-align:right;transform-origin:100% 50%;color:#9a9a9a">13</div>
<div class="t" style="left:49.80px;top:301.25px;color:#9a9a9a">X</div>
<svg style="left:70px;top:302.38px" width="6" height="7" viewBox="0 0 6 7"><path d="M2 0H4V3.5H5.8L3 6.6L.2 3.5H2Z" fill="#a8a8a8"/></svg>
<div class="t" style="left:77.80px;top:301.25px;color:#9a9a9a">pas...</div>
<div class="t" style="left:99.30px;top:301.25px;color:#9a9a9a">unused-hs...</div>
<div class="t" style="right:376.90px;top:301.25px;text-align:right;transform-origin:100% 50%;color:#9a9a9a">0 B</div>
<div class="t" style="right:338.10px;top:301.25px;text-align:right;transform-origin:100% 50%;color:#9a9a9a">0</div>
<div class="" style="left:33.00px;top:309.90px;width:561.20px;height:1.00px;background:#9a9a9a"></div>
<div class="" style="left:583.20px;top:138.50px;width:10.40px;height:171.50px;background:#f6f6f6;border-left:1px solid #e4e4e4"></div>
<div class="" style="left:583.20px;top:138.50px;width:11.00px;height:11.10px;background:#f8f8f8;border-bottom:1px solid #8a8a8a"></div>
<svg style="left:586px;top:142.5px" width="5" height="3" viewBox="0 0 5 3"><path d="M0 3H5L2.5 0Z" fill="#111"/></svg>
<div class="" style="left:584.00px;top:251.00px;width:9.60px;height:48.50px;background:#6f6f6f"></div>
<div class="" style="left:583.20px;top:300.00px;width:11.00px;height:10.00px;background:#f0f0f0"></div>
<svg style="left:586.5px;top:303.5px" width="4.5" height="3" viewBox="0 0 4.5 3"><path d="M0 0H4.5L2.25 3Z" fill="#111"/></svg>
<div class="" style="left:33.00px;top:311.00px;width:562.00px;height:12.00px;background:#f0f0f0;border-left:1px solid #e2e2e2;border-bottom:1px solid #fafafa"></div>
<div class="t" style="left:34.50px;top:312.60px;">18 items (1 selected)</div>
<div class="win" style="left:605.00px;top:-6.00px;width:191.20px;height:213.00px;"></div>
<div class="cont" style="left:611.00px;top:16.00px;width:179.50px;height:185.20px;"></div>
<svg style="left:611.20px;top:2.80px" width="9.2" height="8.7" viewBox="0 0 9.2 8.7"><rect x=".5" y=".5" width="8.2" height="7.7" fill="#fbfbfb" stroke="#a2a2a2"/><rect x=".5" y=".5" width="8.2" height="1.3" fill="#b4b4b4"/><rect x="1.5" y="2.7" width="3" height="4.6" fill="#3b8a70"/><rect x="6.6" y="2.4" width="1" height="1.2" fill="#777"/></svg>
<div class="ttl" style="left:624.60px;top:2.80px;">DHCP Network &lt;20.10.5.0/30&gt;</div>
<div class="cls" style="left:770.00px;top:2.30px;width:19.70px;height:10.70px;"></div>
<svg style="left:775px;top:4px" width="9" height="8" viewBox="0 0 9 8"><path d="M2 2.1L7 5.9M7 2.1L2 5.9" stroke="#5f656d" stroke-width="2.6" stroke-linecap="round"/><path d="M2.1 2.2L6.9 5.8M6.9 2.2L2.1 5.8" stroke="#f6f8fa" stroke-width="1.1" stroke-linecap="round"/></svg>
<div class="t" style="right:137.60px;top:20.80px;text-align:right;transform-origin:100% 50%;">Address:</div>
<div class="fld" style="left:666.00px;top:19.00px;width:71.00px;height:11.50px;"></div>
<div class="t" style="left:668.50px;top:20.50px;">20.10.5.0/30</div>
<div class="t" style="right:137.60px;top:37.35px;text-align:right;transform-origin:100% 50%;">Gateway:</div>
<div class="fld" style="left:666.00px;top:35.55px;width:59.00px;height:11.50px;"></div>
<div class="t" style="left:668.50px;top:37.05px;">20.10.5.1</div>
<svg style="left:728.50px;top:37.35px" width="6" height="8" viewBox="0 0 6 8"><path d="M0 3.3H6L3 0Z" fill="#111"/><path d="M0 4.7H6L3 8Z" fill="#111"/></svg>
<div class="t" style="right:137.60px;top:53.90px;text-align:right;transform-origin:100% 50%;">Netmask:</div>
<div class="fld" style="left:666.00px;top:52.10px;width:59.00px;height:11.50px;"></div>
<div class="t" style="left:668.50px;top:53.60px;">30</div>
<svg style="left:728.50px;top:56.10px" width="6" height="4" viewBox="0 0 6 4"><path d="M0 3.6H6L3 0Z" fill="#111"/></svg>
<div class="t" style="right:137.60px;top:70.45px;text-align:right;transform-origin:100% 50%;">DNS Servers:</div>
<div class="fld" style="left:666.00px;top:68.65px;width:59.00px;height:11.50px;"></div>
<div class="t" style="left:668.50px;top:70.15px;">20.10.5.1</div>
<svg style="left:728.50px;top:70.45px" width="6" height="8" viewBox="0 0 6 8"><path d="M0 3.3H6L3 0Z" fill="#111"/><path d="M0 4.7H6L3 8Z" fill="#111"/></svg>
<div class="t" style="right:137.60px;top:87.00px;text-align:right;transform-origin:100% 50%;">DNS Domain:</div>
<div class="fdis" style="left:666.00px;top:85.20px;width:59.00px;height:11.50px;"></div>
<svg style="left:728.50px;top:89.60px" width="6" height="4" viewBox="0 0 6 4"><path d="M0 0H6L3 3.6Z" fill="#111"/></svg>
<div class="t" style="right:137.60px;top:103.55px;text-align:right;transform-origin:100% 50%;">WINS Servers:</div>
<div class="fdis" style="left:666.00px;top:101.75px;width:59.00px;height:11.50px;"></div>
<svg style="left:728.50px;top:103.55px" width="6" height="8" viewBox="0 0 6 8"><path d="M0 3.3H6L3 0Z" fill="#808080"/><path d="M0 4.7H6L3 8Z" fill="#111"/></svg>
<div class="t" style="right:137.60px;top:120.10px;text-align:right;transform-origin:100% 50%;">NTP Servers:</div>
<div class="fdis" style="left:666.00px;top:118.30px;width:59.00px;height:11.50px;"></div>
<svg style="left:728.50px;top:120.10px" width="6" height="8" viewBox="0 0 6 8"><path d="M0 3.3H6L3 0Z" fill="#808080"/><path d="M0 4.7H6L3 8Z" fill="#111"/></svg>
<div class="t" style="right:137.60px;top:136.65px;text-align:right;transform-origin:100% 50%;">Domain:</div>
<div class="fdis" style="left:666.00px;top:134.85px;width:59.00px;height:11.50px;"></div>
<svg style="left:728.50px;top:139.25px" width="6" height="4" viewBox="0 0 6 4"><path d="M0 0H6L3 3.6Z" fill="#111"/></svg>
<div class="t" style="right:137.60px;top:153.20px;text-align:right;transform-origin:100% 50%;">Next Server:</div>
<div class="fdis" style="left:666.00px;top:151.40px;width:59.00px;height:11.50px;"></div>
<svg style="left:728.50px;top:155.80px" width="6" height="4" viewBox="0 0 6 4"><path d="M0 0H6L3 3.6Z" fill="#111"/></svg>
<div class="t" style="right:137.60px;top:169.75px;text-align:right;transform-origin:100% 50%;">Boot File Name:</div>
<div class="fdis" style="left:666.00px;top:167.95px;width:59.00px;height:11.50px;"></div>
<svg style="left:728.50px;top:172.35px" width="6" height="4" viewBox="0 0 6 4"><path d="M0 0H6L3 3.6Z" fill="#111"/></svg>
<div class="t" style="right:137.60px;top:186.30px;text-align:right;transform-origin:100% 50%;">DHCP Options:</div>
<div class="fdis" style="left:666.00px;top:184.50px;width:59.00px;height:11.50px;"></div>
<svg style="left:728.50px;top:186.30px" width="6" height="8" viewBox="0 0 6 8"><path d="M0 3.3H6L3 0Z" fill="#808080"/><path d="M0 4.7H6L3 8Z" fill="#111"/></svg>
<div class="okb" style="left:747.00px;top:19.00px;width:39.50px;height:14.20px;"></div>
<div class="t" style="left:706.75px;width:120px;text-align:center;top:21.40px;transform-origin:50% 50%;">OK</div>
<div class="btn" style="left:747.00px;top:35.60px;width:39.50px;height:14.20px;"></div>
<div class="t" style="left:706.75px;width:120px;text-align:center;top:38.00px;transform-origin:50% 50%;">Cancel</div>
<div class="btn" style="left:747.00px;top:52.20px;width:39.50px;height:14.20px;"></div>
<div class="t" style="left:706.75px;width:120px;text-align:center;top:54.60px;transform-origin:50% 50%;">Apply</div>
<div class="btn" style="left:747.00px;top:72.45px;width:39.50px;height:14.20px;"></div>
<div class="t" style="left:706.75px;width:120px;text-align:center;top:74.85px;transform-origin:50% 50%;">Comment</div>
<div class="btn" style="left:747.00px;top:89.22px;width:39.50px;height:14.20px;"></div>
<div class="t" style="left:706.75px;width:120px;text-align:center;top:91.62px;transform-origin:50% 50%;">Copy</div>
<div class="btn" style="left:747.00px;top:105.82px;width:39.50px;height:14.20px;"></div>
<div class="t" style="left:706.75px;width:120px;text-align:center;top:108.22px;transform-origin:50% 50%;">Remove</div>
<div class="win" style="left:606.40px;top:210.00px;width:191.80px;height:211.50px;"></div>
<div class="cont" style="left:612.00px;top:229.50px;width:179.50px;height:186.00px;"></div>
<svg style="left:612.80px;top:217.00px" width="9.2" height="8.7" viewBox="0 0 9.2 8.7"><rect x=".5" y=".5" width="8.2" height="7.7" fill="#fbfbfb" stroke="#a2a2a2"/><rect x=".5" y=".5" width="8.2" height="1.3" fill="#b4b4b4"/><rect x="1.5" y="2.7" width="3" height="4.6" fill="#3b8a70"/><rect x="6.6" y="2.4" width="1" height="1.2" fill="#777"/></svg>
<div class="ttl" style="left:626.20px;top:217.00px;">DHCP Network &lt;20.10.6.0/30&gt;</div>
<div class="cls" style="left:771.50px;top:217.40px;width:19.50px;height:10.00px;"></div>
<svg style="left:777px;top:218px" width="9" height="8" viewBox="0 0 9 8"><path d="M2 2.1L7 5.9M7 2.1L2 5.9" stroke="#5f656d" stroke-width="2.6" stroke-linecap="round"/><path d="M2.1 2.2L6.9 5.8M6.9 2.2L2.1 5.8" stroke="#f6f8fa" stroke-width="1.1" stroke-linecap="round"/></svg>
<div class="t" style="right:137.10px;top:235.20px;text-align:right;transform-origin:100% 50%;">Address:</div>
<div class="fld" style="left:666.50px;top:233.40px;width:70.70px;height:11.50px;"></div>
<div class="t" style="left:669.00px;top:234.90px;">20.10.6.0/30</div>
<div class="t" style="right:137.10px;top:251.75px;text-align:right;transform-origin:100% 50%;">Gateway:</div>
<div class="fld" style="left:666.50px;top:249.95px;width:59.50px;height:11.50px;"></div>
<div class="t" style="left:669.00px;top:251.45px;">20.10.6.1</div>
<svg style="left:729.50px;top:251.75px" width="6" height="8" viewBox="0 0 6 8"><path d="M0 3.3H6L3 0Z" fill="#111"/><path d="M0 4.7H6L3 8Z" fill="#111"/></svg>
<div class="t" style="right:137.10px;top:268.30px;text-align:right;transform-origin:100% 50%;">Netmask:</div>
<div class="fld" style="left:666.50px;top:266.50px;width:59.50px;height:11.50px;"></div>
<div class="t" style="left:669.00px;top:268.00px;">30</div>
<svg style="left:729.50px;top:270.50px" width="6" height="4" viewBox="0 0 6 4"><path d="M0 3.6H6L3 0Z" fill="#111"/></svg>
<div class="t" style="right:137.10px;top:284.85px;text-align:right;transform-origin:100% 50%;">DNS Servers:</div>
<div class="fld" style="left:666.50px;top:283.05px;width:59.50px;height:11.50px;"></div>
<div class="t" style="left:669.00px;top:284.55px;">20.10.6.1</div>
<svg style="left:729.50px;top:284.85px" width="6" height="8" viewBox="0 0 6 8"><path d="M0 3.3H6L3 0Z" fill="#111"/><path d="M0 4.7H6L3 8Z" fill="#111"/></svg>
<div class="t" style="right:137.10px;top:301.40px;text-align:right;transform-origin:100% 50%;">DNS Domain:</div>
<div class="fdis" style="left:666.50px;top:299.60px;width:59.50px;height:11.50px;"></div>
<svg style="left:729.50px;top:304.00px" width="6" height="4" viewBox="0 0 6 4"><path d="M0 0H6L3 3.6Z" fill="#111"/></svg>
<div class="t" style="right:137.10px;top:317.95px;text-align:right;transform-origin:100% 50%;">WINS Servers:</div>
<div class="fdis" style="left:666.50px;top:316.15px;width:59.50px;height:11.50px;"></div>
<svg style="left:729.50px;top:317.95px" width="6" height="8" viewBox="0 0 6 8"><path d="M0 3.3H6L3 0Z" fill="#808080"/><path d="M0 4.7H6L3 8Z" fill="#111"/></svg>
<div class="t" style="right:137.10px;top:334.50px;text-align:right;transform-origin:100% 50%;">NTP Servers:</div>
<div class="fdis" style="left:666.50px;top:332.70px;width:59.50px;height:11.50px;"></div>
<svg style="left:729.50px;top:334.50px" width="6" height="8" viewBox="0 0 6 8"><path d="M0 3.3H6L3 0Z" fill="#808080"/><path d="M0 4.7H6L3 8Z" fill="#111"/></svg>
<div class="t" style="right:137.10px;top:351.05px;text-align:right;transform-origin:100% 50%;">Domain:</div>
<div class="fdis" style="left:666.50px;top:349.25px;width:59.50px;height:11.50px;"></div>
<svg style="left:729.50px;top:353.65px" width="6" height="4" viewBox="0 0 6 4"><path d="M0 0H6L3 3.6Z" fill="#111"/></svg>
<div class="t" style="right:137.10px;top:367.60px;text-align:right;transform-origin:100% 50%;">Next Server:</div>
<div class="fdis" style="left:666.50px;top:365.80px;width:59.50px;height:11.50px;"></div>
<svg style="left:729.50px;top:370.20px" width="6" height="4" viewBox="0 0 6 4"><path d="M0 0H6L3 3.6Z" fill="#111"/></svg>
<div class="t" style="right:137.10px;top:384.15px;text-align:right;transform-origin:100% 50%;">Boot File Name:</div>
<div class="fdis" style="left:666.50px;top:382.35px;width:59.50px;height:11.50px;"></div>
<svg style="left:729.50px;top:386.75px" width="6" height="4" viewBox="0 0 6 4"><path d="M0 0H6L3 3.6Z" fill="#111"/></svg>
<div class="t" style="right:137.10px;top:400.70px;text-align:right;transform-origin:100% 50%;">DHCP Options:</div>
<div class="fdis" style="left:666.50px;top:398.90px;width:59.50px;height:11.50px;"></div>
<svg style="left:729.50px;top:400.70px" width="6" height="8" viewBox="0 0 6 8"><path d="M0 3.3H6L3 0Z" fill="#808080"/><path d="M0 4.7H6L3 8Z" fill="#111"/></svg>
<div class="okb" style="left:748.40px;top:232.90px;width:40.00px;height:14.20px;"></div>
<div class="t" style="left:708.40px;width:120px;text-align:center;top:235.30px;transform-origin:50% 50%;">OK</div>
<div class="btn" style="left:748.40px;top:249.50px;width:40.00px;height:14.20px;"></div>
<div class="t" style="left:708.40px;width:120px;text-align:center;top:251.90px;transform-origin:50% 50%;">Cancel</div>
<div class="btn" style="left:748.40px;top:266.10px;width:40.00px;height:14.20px;"></div>
<div class="t" style="left:708.40px;width:120px;text-align:center;top:268.50px;transform-origin:50% 50%;">Apply</div>
<div class="btn" style="left:748.40px;top:286.35px;width:40.00px;height:14.20px;"></div>
<div class="t" style="left:708.40px;width:120px;text-align:center;top:288.75px;transform-origin:50% 50%;">Comment</div>
<div class="btn" style="left:748.40px;top:303.12px;width:40.00px;height:14.20px;"></div>
<div class="t" style="left:708.40px;width:120px;text-align:center;top:305.52px;transform-origin:50% 50%;">Copy</div>
<div class="btn" style="left:748.40px;top:319.72px;width:40.00px;height:14.20px;"></div>
<div class="t" style="left:708.40px;width:120px;text-align:center;top:322.12px;transform-origin:50% 50%;">Remove</div>
<div class="win" style="left:98.30px;top:335.20px;width:241.70px;height:209.80px;"></div>
<div class="cont" style="left:103.30px;top:355.00px;width:230.20px;height:190.00px;"></div>
<svg style="left:104.50px;top:342.20px" width="9.2" height="8.7" viewBox="0 0 9.2 8.7"><rect x=".5" y=".5" width="8.2" height="7.7" fill="#fbfbfb" stroke="#a2a2a2"/><rect x=".5" y=".5" width="8.2" height="1.3" fill="#b4b4b4"/><rect x="1.5" y="2.7" width="3" height="4.6" fill="#3b8a70"/><rect x="6.6" y="2.4" width="1" height="1.2" fill="#777"/></svg>
<div class="ttl" style="left:117.90px;top:342.20px;letter-spacing:.13px">Hotspot Server Profile &lt;default&gt;</div>
<div class="cls" style="left:312.80px;top:342.40px;width:20.00px;height:10.20px;"></div>
<svg style="left:318px;top:344px" width="9" height="8" viewBox="0 0 9 8"><path d="M2 2.1L7 5.9M7 2.1L2 5.9" stroke="#5f656d" stroke-width="2.6" stroke-linecap="round"/><path d="M2.1 2.2L6.9 5.8M6.9 2.2L2.1 5.8" stroke="#f6f8fa" stroke-width="1.1" stroke-linecap="round"/></svg>
<div class="" style="left:104.80px;top:368.60px;width:183.50px;height:176.40px;background:#f3f3f3;border:1px solid #d8d8d8;border-left-color:#e6e6e6"></div>
<div class="tabA" style="left:104.80px;top:355.00px;width:32.10px;height:14.60px;background:#f3f3f3"></div>
<div class="t" style="left:60.70px;width:120px;text-align:center;top:357.80px;transform-origin:50% 50%;">General</div>
<div class="tab" style="left:136.90px;top:357.70px;width:22.50px;height:11.00px;"></div>
<div class="t" style="left:88.10px;width:120px;text-align:center;top:358.80px;transform-origin:50% 50%;">Login</div>
<div class="tab" style="left:159.40px;top:357.70px;width:34.40px;height:11.00px;"></div>
<div class="t" style="left:116.60px;width:120px;text-align:center;top:358.80px;transform-origin:50% 50%;">RADIUS</div>
<div class="t" style="right:638.50px;top:375.80px;text-align:right;transform-origin:100% 50%;">Name:</div>
<div class="fld" style="left:165.30px;top:374.00px;width:116.70px;height:11.50px;"></div>
<div class="t" style="left:168.00px;top:375.60px;">default</div>
<div class="t" style="right:638.50px;top:392.40px;text-align:right;transform-origin:100% 50%;">Hotspot Address:</div>
<div class="fdis" style="left:165.30px;top:390.60px;width:105.40px;height:11.50px;"></div>
<svg style="left:273.30px;top:395.00px" width="6" height="4" viewBox="0 0 6 4"><path d="M0 0H6L3 3.6Z" fill="#111"/></svg>
<div class="t" style="right:638.50px;top:409.00px;text-align:right;transform-origin:100% 50%;color:#2a2aa0">DNS Name:</div>
<div class="fld" style="left:165.30px;top:407.20px;width:105.40px;height:11.50px;"></div>
<div class="t" style="left:168.00px;top:408.80px;">login.exemplo.com</div>
<svg style="left:273.30px;top:411.20px" width="6" height="4" viewBox="0 0 6 4"><path d="M0 3.6H6L3 0Z" fill="#111"/></svg>
<div class="t" style="right:638.50px;top:425.50px;text-align:right;transform-origin:100% 50%;">HTML Directory:</div>
<div class="fld" style="left:165.30px;top:423.70px;width:105.40px;height:11.50px;"></div>
<div class="t" style="left:168.00px;top:425.30px;">hotspot</div>
<div class="tb" style="left:271.40px;top:423.70px;width:9.80px;height:11.50px;"></div>
<svg style="left:273.80px;top:426.50px" width="5" height="7" viewBox="0 0 5 7"><path d="M.3 .6H4.7" stroke="#111" stroke-width="1"/><path d="M0 2.8H5L2.5 6Z M1.8 1.5H3.2V3H1.8Z" fill="#111"/></svg>
<div class="t" style="right:638.50px;top:441.70px;text-align:right;transform-origin:100% 50%;">Rate Limit (rx/tx):</div>
<div class="fdis" style="left:165.30px;top:439.90px;width:105.40px;height:11.50px;"></div>
<svg style="left:273.30px;top:444.30px" width="6" height="4" viewBox="0 0 6 4"><path d="M0 0H6L3 3.6Z" fill="#111"/></svg>
<div class="" style="left:107.00px;top:457.50px;width:178.00px;height:1.00px;background:#dcdcdc"></div>
<div class="t" style="right:638.50px;top:465.10px;text-align:right;transform-origin:100% 50%;">HTTP Proxy:</div>
<div class="fdis" style="left:165.30px;top:463.30px;width:105.40px;height:11.50px;"></div>
<svg style="left:273.30px;top:467.70px" width="6" height="4" viewBox="0 0 6 4"><path d="M0 0H6L3 3.6Z" fill="#111"/></svg>
<div class="t" style="right:638.50px;top:480.50px;text-align:right;transform-origin:100% 50%;">HTTP Proxy Port:</div>
<div class="fld" style="left:165.30px;top:478.70px;width:116.70px;height:11.50px;"></div>
<div class="t" style="left:168.00px;top:480.30px;">0</div>
<div class="t" style="right:638.50px;top:497.00px;text-align:right;transform-origin:100% 50%;">SMTP Server:</div>
<div class="fdis" style="left:165.30px;top:495.20px;width:105.40px;height:11.50px;"></div>
<svg style="left:273.30px;top:499.60px" width="6" height="4" viewBox="0 0 6 4"><path d="M0 0H6L3 3.6Z" fill="#111"/></svg>
<div class="okb" style="left:294.30px;top:357.40px;width:37.30px;height:14.20px;"></div>
<div class="t" style="left:252.95px;width:120px;text-align:center;top:360.30px;transform-origin:50% 50%;">OK</div>
<div class="btn" style="left:294.30px;top:374.40px;width:37.30px;height:13.80px;"></div>
<div class="t" style="left:252.95px;width:120px;text-align:center;top:377.10px;transform-origin:50% 50%;">Cancel</div>
<div class="btn" style="left:294.30px;top:390.80px;width:37.30px;height:14.10px;"></div>
<div class="t" style="left:252.95px;width:120px;text-align:center;top:393.65px;transform-origin:50% 50%;">Apply</div>
<div class="btn" style="left:294.30px;top:411.20px;width:37.30px;height:14.20px;"></div>
<div class="t" style="left:252.95px;width:120px;text-align:center;top:414.10px;transform-origin:50% 50%;">Copy</div>
<div class="btn" style="left:294.30px;top:427.90px;width:37.30px;height:14.10px;"></div>
<div class="t" style="left:252.95px;width:120px;text-align:center;top:430.75px;transform-origin:50% 50%;">Remove</div>
<div class="win" style="left:366.20px;top:416.90px;width:238.80px;height:128.10px;"></div>
<div class="cont" style="left:372.00px;top:436.50px;width:228.40px;height:108.50px;"></div>
<svg style="left:372.90px;top:424.20px" width="9.2" height="8.7" viewBox="0 0 9.2 8.7"><rect x=".5" y=".5" width="8.2" height="7.7" fill="#fbfbfb" stroke="#a2a2a2"/><rect x=".5" y=".5" width="8.2" height="1.3" fill="#b4b4b4"/><rect x="1.5" y="2.7" width="3" height="4.6" fill="#3b8a70"/><rect x="6.6" y="2.4" width="1" height="1.2" fill="#777"/></svg>
<div class="ttl" style="left:386.30px;top:424.20px;">DNS Settings</div>
<div class="cls" style="left:578.00px;top:423.40px;width:20.20px;height:11.00px;"></div>
<svg style="left:584px;top:425px" width="9" height="8" viewBox="0 0 9 8"><path d="M2 2.1L7 5.9M7 2.1L2 5.9" stroke="#5f656d" stroke-width="2.6" stroke-linecap="round"/><path d="M2.1 2.2L6.9 5.8M6.9 2.2L2.1 5.8" stroke="#f6f8fa" stroke-width="1.1" stroke-linecap="round"/></svg>
<div class="t" style="right:355.00px;top:442.00px;text-align:right;transform-origin:100% 50%;">Servers:</div>
<div class="fld" style="left:449.00px;top:440.30px;width:86.60px;height:11.30px;"></div>
<div class="t" style="left:451.50px;top:441.80px;">201.82.0.69</div>
<div class="fld" style="left:449.00px;top:457.20px;width:86.60px;height:11.20px;"></div>
<div class="t" style="left:451.50px;top:458.60px;">201.82.0.64</div>
<svg style="left:539px;top:442.00px" width="6" height="8" viewBox="0 0 6 8"><path d="M0 3.3H6L3 0Z M0 4.7H6L3 8Z" fill="#111"/></svg>
<svg style="left:539px;top:458.80px" width="6" height="8" viewBox="0 0 6 8"><path d="M0 3.3H6L3 0Z M0 4.7H6L3 8Z" fill="#111"/></svg>
<div class="" style="left:375.00px;top:474.50px;width:175.00px;height:1.00px;background:#dcdcdc"></div>
<div class="" style="left:449.20px;top:480.30px;width:7.40px;height:7.50px;background:#fff;border:1px solid #b0b0b0"></div>
<div class="t" style="left:460.00px;top:480.10px;">Allow Remote Requests</div>
<div class="t" style="right:355.00px;top:493.70px;text-align:right;transform-origin:100% 50%;letter-spacing:.08px">Max UDP Packet Size:</div>
<div class="fld" style="left:449.00px;top:492.80px;width:98.50px;height:10.30px;"></div>
<div class="t" style="left:451.50px;top:493.80px;">512</div>
<div class="t" style="right:355.00px;top:509.70px;text-align:right;transform-origin:100% 50%;">Cache Size:</div>
<div class="fld" style="left:449.00px;top:508.40px;width:84.40px;height:11.00px;"></div>
<div class="t" style="left:451.50px;top:509.80px;">10240</div>
<div class="t" style="left:536.60px;top:509.80px;">KiB</div>
<div class="t" style="right:355.00px;top:525.80px;text-align:right;transform-origin:100% 50%;">Cache Used:</div>
<div class="fld" style="left:449.00px;top:525.00px;width:98.50px;height:11.00px;"></div>
<div class="t" style="left:451.50px;top:526.30px;">2425</div>
<div class="okb" style="left:558.30px;top:439.60px;width:37.20px;height:14.60px;"></div>
<div class="t" style="left:516.90px;width:120px;text-align:center;top:442.70px;transform-origin:50% 50%;">OK</div>
<div class="btn" style="left:558.30px;top:456.90px;width:37.20px;height:13.70px;"></div>
<div class="t" style="left:516.90px;width:120px;text-align:center;top:459.55px;transform-origin:50% 50%;">Cancel</div>
<div class="btn" style="left:558.30px;top:473.20px;width:37.20px;height:14.00px;"></div>
<div class="t" style="left:516.90px;width:120px;text-align:center;top:476.00px;transform-origin:50% 50%;">Apply</div>
</div></body></html>
